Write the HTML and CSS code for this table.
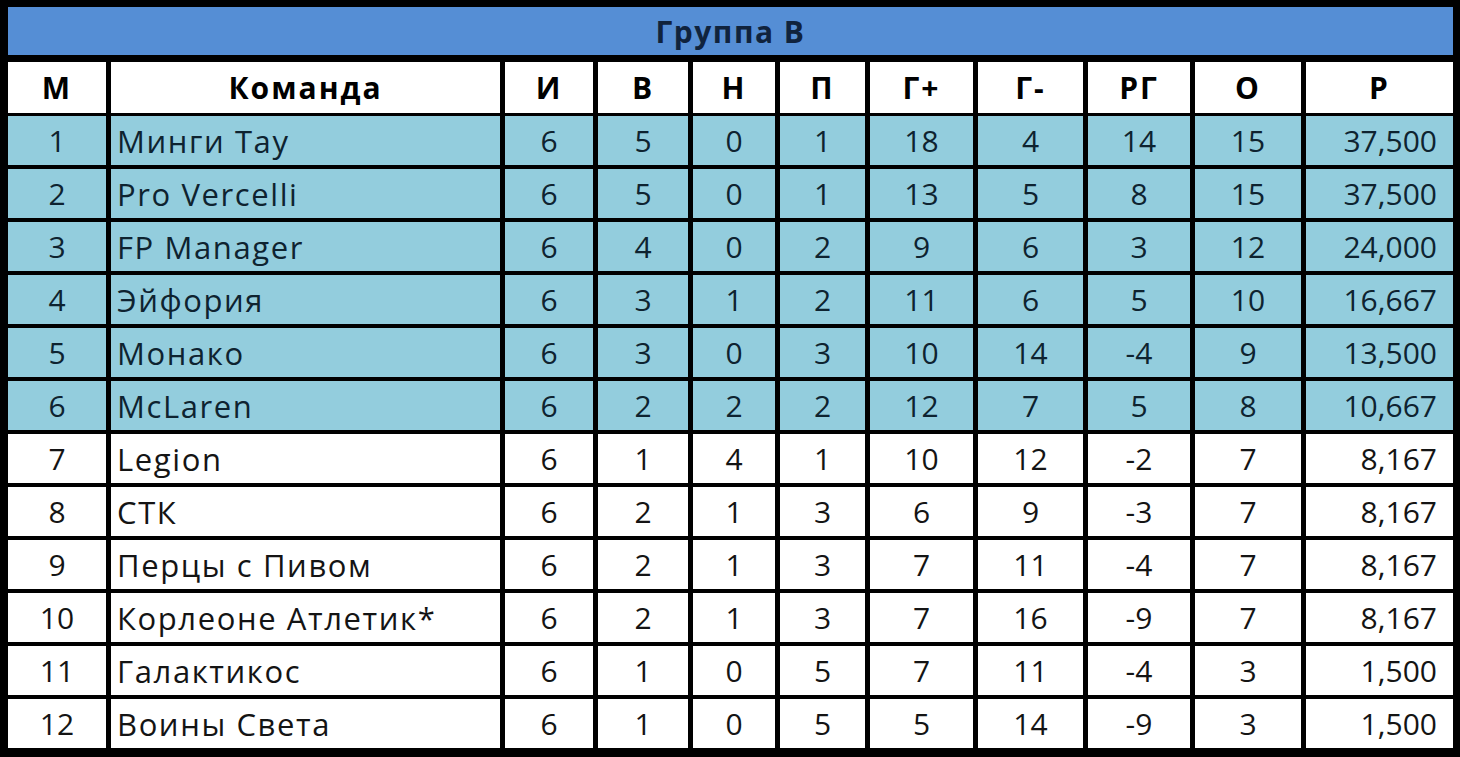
FILE: index.html
```html
<!DOCTYPE html>
<html lang="ru">
<head>
<meta charset="utf-8">
<title>Группа В</title>
<link rel="stylesheet" href="styles.css">
</head>
<body>
<div class="board">
  <div class="title">Группа В</div>
  <div class="table">
    <div class="cell head">М</div><div class="cell head">Команда</div><div class="cell head">И</div><div class="cell head">В</div><div class="cell head">Н</div><div class="cell head">П</div><div class="cell head">Г+</div><div class="cell head">Г-</div><div class="cell head">РГ</div><div class="cell head">О</div><div class="cell head">Р</div>

    <div class="cell hl">1</div><div class="cell hl team">Минги Тау</div><div class="cell hl">6</div><div class="cell hl">5</div><div class="cell hl">0</div><div class="cell hl">1</div><div class="cell hl">18</div><div class="cell hl">4</div><div class="cell hl">14</div><div class="cell hl">15</div><div class="cell hl rating">37,500</div>
    <div class="cell hl">2</div><div class="cell hl team">Pro Vercelli</div><div class="cell hl">6</div><div class="cell hl">5</div><div class="cell hl">0</div><div class="cell hl">1</div><div class="cell hl">13</div><div class="cell hl">5</div><div class="cell hl">8</div><div class="cell hl">15</div><div class="cell hl rating">37,500</div>
    <div class="cell hl">3</div><div class="cell hl team">FP Manager</div><div class="cell hl">6</div><div class="cell hl">4</div><div class="cell hl">0</div><div class="cell hl">2</div><div class="cell hl">9</div><div class="cell hl">6</div><div class="cell hl">3</div><div class="cell hl">12</div><div class="cell hl rating">24,000</div>
    <div class="cell hl">4</div><div class="cell hl team">Эйфория</div><div class="cell hl">6</div><div class="cell hl">3</div><div class="cell hl">1</div><div class="cell hl">2</div><div class="cell hl">11</div><div class="cell hl">6</div><div class="cell hl">5</div><div class="cell hl">10</div><div class="cell hl rating">16,667</div>
    <div class="cell hl">5</div><div class="cell hl team">Монако</div><div class="cell hl">6</div><div class="cell hl">3</div><div class="cell hl">0</div><div class="cell hl">3</div><div class="cell hl">10</div><div class="cell hl">14</div><div class="cell hl">-4</div><div class="cell hl">9</div><div class="cell hl rating">13,500</div>
    <div class="cell hl">6</div><div class="cell hl team">McLaren</div><div class="cell hl">6</div><div class="cell hl">2</div><div class="cell hl">2</div><div class="cell hl">2</div><div class="cell hl">12</div><div class="cell hl">7</div><div class="cell hl">5</div><div class="cell hl">8</div><div class="cell hl rating">10,667</div>

    <div class="cell">7</div><div class="cell team">Legion</div><div class="cell">6</div><div class="cell">1</div><div class="cell">4</div><div class="cell">1</div><div class="cell">10</div><div class="cell">12</div><div class="cell">-2</div><div class="cell">7</div><div class="cell rating">8,167</div>
    <div class="cell">8</div><div class="cell team">СТК</div><div class="cell">6</div><div class="cell">2</div><div class="cell">1</div><div class="cell">3</div><div class="cell">6</div><div class="cell">9</div><div class="cell">-3</div><div class="cell">7</div><div class="cell rating">8,167</div>
    <div class="cell">9</div><div class="cell team">Перцы с Пивом</div><div class="cell">6</div><div class="cell">2</div><div class="cell">1</div><div class="cell">3</div><div class="cell">7</div><div class="cell">11</div><div class="cell">-4</div><div class="cell">7</div><div class="cell rating">8,167</div>
    <div class="cell">10</div><div class="cell team">Корлеоне Атлетик*</div><div class="cell">6</div><div class="cell">2</div><div class="cell">1</div><div class="cell">3</div><div class="cell">7</div><div class="cell">16</div><div class="cell">-9</div><div class="cell">7</div><div class="cell rating">8,167</div>
    <div class="cell">11</div><div class="cell team">Галактикос</div><div class="cell">6</div><div class="cell">1</div><div class="cell">0</div><div class="cell">5</div><div class="cell">7</div><div class="cell">11</div><div class="cell">-4</div><div class="cell">3</div><div class="cell rating">1,500</div>
    <div class="cell">12</div><div class="cell team">Воины Света</div><div class="cell">6</div><div class="cell">1</div><div class="cell">0</div><div class="cell">5</div><div class="cell">5</div><div class="cell">14</div><div class="cell">-9</div><div class="cell">3</div><div class="cell rating">1,500</div>
  </div>
</div>
</body>
</html>
```

FILE: styles.css
```css
html, body {
  margin: 0;
  padding: 0;
  background: #000;
}

body {
  width: 1460px;
  height: 757px;
  overflow: hidden;
  font-family: "Open Sans", "Noto Sans", sans-serif;
}

.board {
  box-sizing: border-box;
  width: 1460px;
  height: 757px;
  padding: 7px 7px 8px 8px;
  background: #000;
  display: flex;
  flex-direction: column;
}

.title {
  height: 48px;
  margin-bottom: 7px;
  background: #558ed5;
  color: #10233d;
  font-weight: 700;
  font-size: 30px;
  letter-spacing: 1.5px;
  display: flex;
  align-items: center;
  justify-content: center;
}

.table {
  display: grid;
  grid-template-columns: 98px 389px 88px 90px 82px 85px 103px 105px 102px 106px 147px;
  grid-template-rows: 50px repeat(12, 49px);
  column-gap: 5px;
  row-gap: 4px;
}

.cell {
  background: #fff;
  color: #141414;
  font-size: 30px;
  display: flex;
  align-items: center;
  justify-content: center;
  white-space: nowrap;
}

.head {
  font-weight: 700;
  color: #000;
  letter-spacing: 2px;
  margin-bottom: -1px;
}

.hl {
  background: #93cddd;
  color: #0e2330;
}

.team {
  justify-content: flex-start;
  padding-left: 6px;
  font-size: 31px;
  letter-spacing: 1.6px;
}

.rating {
  justify-content: flex-end;
  padding-right: 16px;
}
```
